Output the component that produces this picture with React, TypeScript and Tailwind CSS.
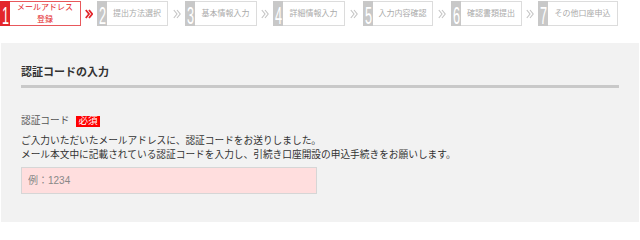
const steps = [
  { n: "1", label: "メールアドレス", label2: "登録", w: "w-[81px]", active: true },
  { n: "2", label: "提出方法選択", w: "w-[71px]" },
  { n: "3", label: "基本情報入力", w: "w-[72px]" },
  { n: "4", label: "詳細情報入力", w: "w-[72px]" },
  { n: "5", label: "入力内容確認", w: "w-[70px]" },
  { n: "6", label: "確認書類提出", w: "w-[71px]" },
  { n: "7", label: "その他口座申込", w: "w-[80px]" },
]

const chevronWidths = ["w-[16px]", "w-[17px]", "w-[16px]", "w-[18px]", "w-[18px]", "w-[16px]"]

function Chevron({ active }: { active?: boolean }) {
  return (
    <svg width="8" height="10" viewBox="0 0 8 10" fill="none">
      <path
        d="M0.8 1 L4 5 L0.8 9 M4 1 L7.2 5 L4 9"
        stroke={active ? "#e3262b" : "#c4c4c4"}
        strokeWidth={active ? 1.8 : 1.1}
      />
    </svg>
  )
}

export default function App() {
  return (
    <div
      className="min-h-[222px] bg-white text-[#333]"
      style={{ fontFamily: '"Liberation Sans", "Noto Sans CJK JP", sans-serif' }}
    >
      {/* progress steps */}
      <div className="mt-px flex h-[25px]">
        {steps.map((s, i) => (
          <div key={s.n} className="flex">
            <div className={`flex ${s.w}`}>
              <div
                className={`flex w-[10px] justify-center ${
                  s.active ? "bg-[#e3262b]" : "bg-[#c8c8c8]"
                }`}
              >
                <span className="inline-block translate-y-[3px] scale-x-55 text-[23px] leading-[25px] text-white">
                  {s.n}
                </span>
              </div>
              <div
                className={`flex flex-1 flex-col items-center justify-center border border-l-0 bg-white text-[8px] leading-[12px] ${
                  s.active ? "border-[#e8585c] text-[#e3262b]" : "border-[#dcdcdc] text-[#aaa]"
                }`}
              >
                <span>{s.label}</span>
                {s.label2 && <span>{s.label2}</span>}
              </div>
            </div>
            {i < chevronWidths.length && (
              <div className={`flex items-center justify-center ${chevronWidths[i]}`}>
                <Chevron active={s.active} />
              </div>
            )}
          </div>
        ))}
      </div>

      {/* form panel */}
      <div className="mx-px mt-[17px] bg-[#f2f2f2] px-5 pb-[28px] pt-[22px]">
        <div className="border-b-[3px] border-[#c9c9c9] pb-[6px]">
          <h2 className="text-[11px] font-bold leading-[14px] text-[#333]">認証コードの入力</h2>
        </div>

        <div className="mt-[26px] flex items-center text-[9.7px] leading-[14px] text-[#555]">
          <span>認証コード</span>
          <span className="ml-[7px] flex h-[11px] items-center bg-[#f00] px-[2px] text-[9.6px] leading-none text-white">
            必須
          </span>
        </div>

        <p className="mt-[6px] text-[9.7px] leading-[14px] text-[#333]">
          ご入力いただいたメールアドレスに、認証コードをお送りしました。
          <br />
          メール本文中に記載されている認証コードを入力し、引続き口座開設の申込手続きをお願いします。
        </p>

        <input
          type="text"
          placeholder="例：1234"
          className="mt-[5px] block h-[27px] w-[296px] border border-[#d6d6d6] bg-[#ffdede] px-[6px] text-[10px] text-[#333] outline-none placeholder:text-[#888]"
        />
      </div>
    </div>
  )
}
